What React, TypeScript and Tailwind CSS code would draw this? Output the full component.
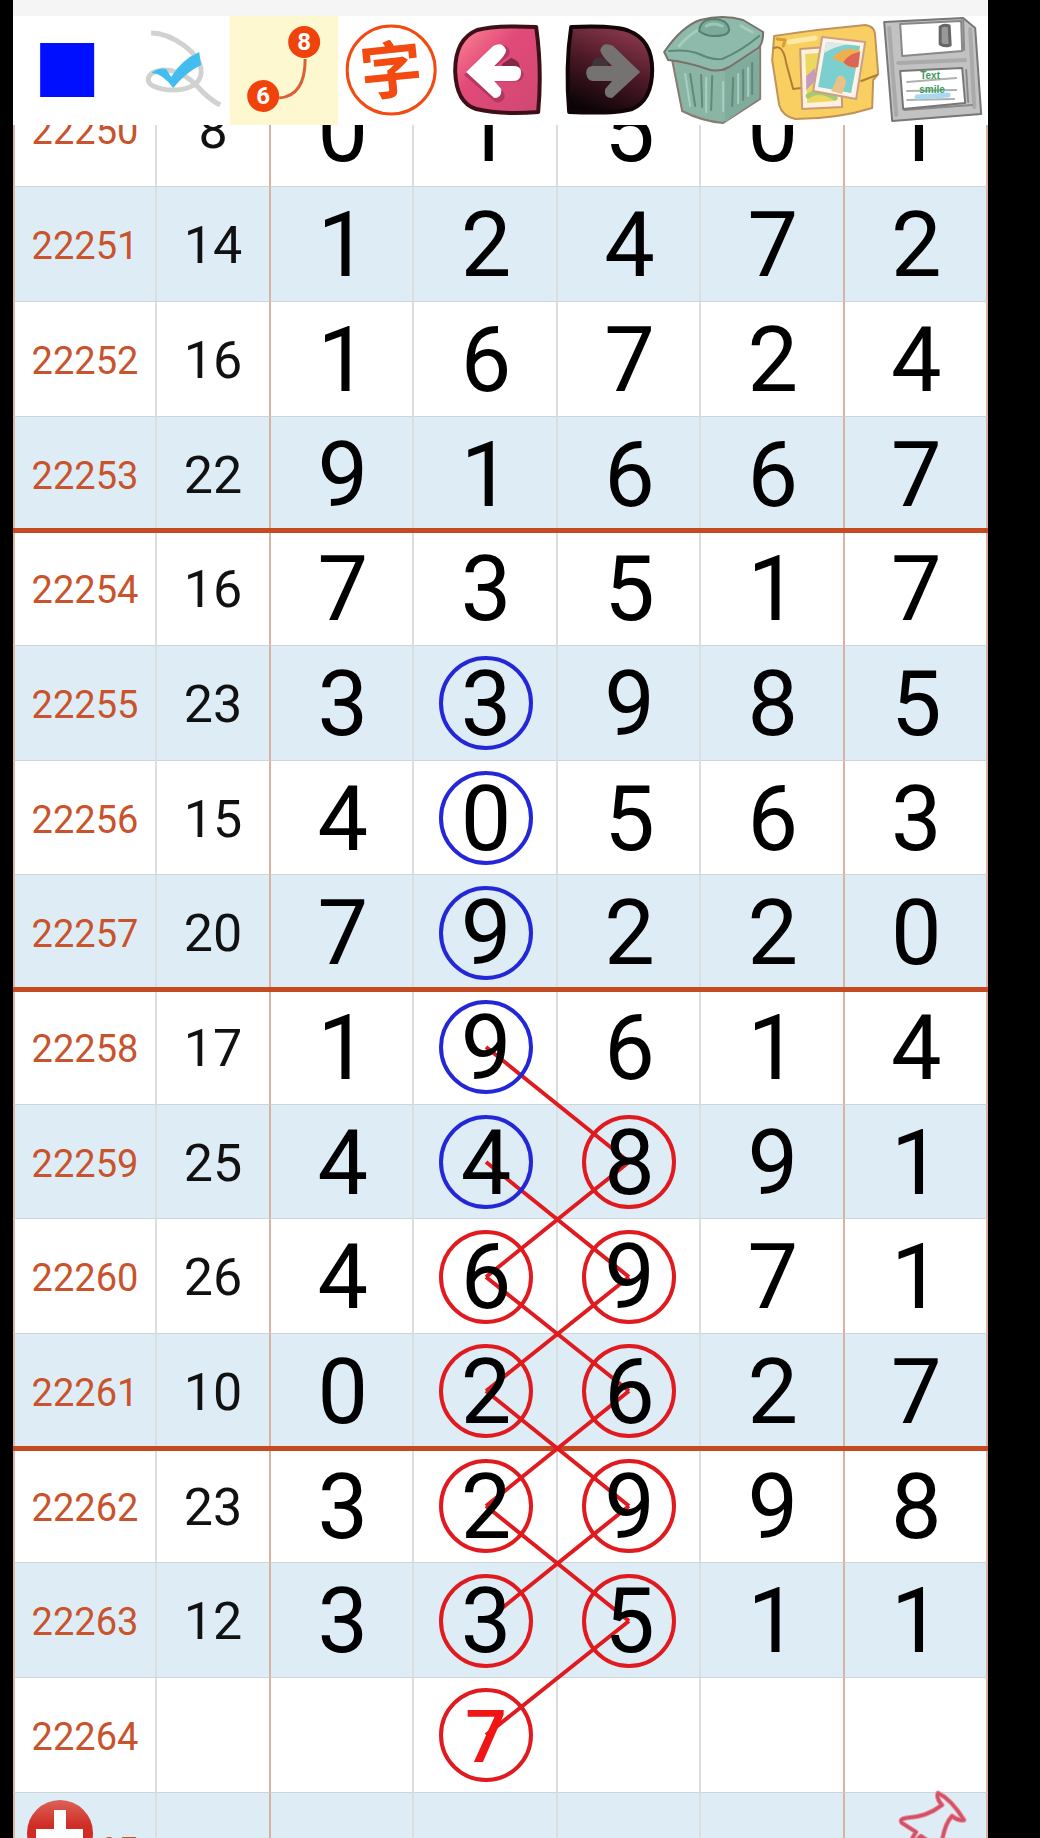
import React from 'react';

type Row = { id: string; sum: string; nums: string[] };

const ROWS: Row[] = [
  { id: '22250', sum: '8', nums: ['0', '1', '5', '0', '1'] },
  { id: '22251', sum: '14', nums: ['1', '2', '4', '7', '2'] },
  { id: '22252', sum: '16', nums: ['1', '6', '7', '2', '4'] },
  { id: '22253', sum: '22', nums: ['9', '1', '6', '6', '7'] },
  { id: '22254', sum: '16', nums: ['7', '3', '5', '1', '7'] },
  { id: '22255', sum: '23', nums: ['3', '3', '9', '8', '5'] },
  { id: '22256', sum: '15', nums: ['4', '0', '5', '6', '3'] },
  { id: '22257', sum: '20', nums: ['7', '9', '2', '2', '0'] },
  { id: '22258', sum: '17', nums: ['1', '9', '6', '1', '4'] },
  { id: '22259', sum: '25', nums: ['4', '4', '8', '9', '1'] },
  { id: '22260', sum: '26', nums: ['4', '6', '9', '7', '1'] },
  { id: '22261', sum: '10', nums: ['0', '2', '6', '2', '7'] },
  { id: '22262', sum: '23', nums: ['3', '2', '9', '9', '8'] },
  { id: '22263', sum: '12', nums: ['3', '3', '5', '1', '1'] },
  { id: '22264', sum: '', nums: ['', '7', '', '', ''] },
  { id: '22265', sum: '', nums: ['', '', '', '', ''] },
];

const BLUE = '#2427d8';
const RED = '#e01a1e';

// overlay coordinates, relative to the top left of the table
const LEFT_X = 473;
const RIGHT_X = 616;
const rowY = (i: number) => Math.round(i * 114.67 + 58);

const CIRCLES = [
  ...[5, 6, 7, 8, 9].map((r) => ({ x: LEFT_X, r, color: BLUE })),
  ...[10, 11, 12, 13, 14].map((r) => ({ x: LEFT_X, r, color: RED })),
  ...[9, 10, 11, 12, 13].map((r) => ({ x: RIGHT_X, r, color: RED })),
];

// sits above the row backgrounds and below the digits
function Marks() {
  return (
    <svg
      viewBox="0 0 975 1835"
      preserveAspectRatio="none"
      className="absolute inset-x-0 top-0 z-10 h-[1835px] w-full pointer-events-none"
      fill="none"
      strokeWidth="4"
    >
      {[8, 9, 10, 11, 12].map((r) => (
        <path key={r} d={`M${LEFT_X} ${rowY(r)}L${RIGHT_X} ${rowY(r + 1)}`} stroke={RED} />
      ))}
      {[9, 10, 11, 12, 13].map((r) => (
        <path key={r} d={`M${RIGHT_X} ${rowY(r)}L${LEFT_X} ${rowY(r + 1)}`} stroke={RED} />
      ))}
      {CIRCLES.map((c) => (
        <circle key={`${c.x}-${c.r}`} cx={c.x} cy={rowY(c.r)} r="45" stroke={c.color} />
      ))}
    </svg>
  );
}

function ColorIcon() {
  return <path d="M27 27h54v54H27z" fill="#0010ff" />;
}

function ScribbleIcon() {
  return (
    <g fill="none">
      <path
        d="M30 17C49 17 80 36 80 56C79 76 48 77 32 70C24 66 26 57 37 55C48 52 63 57 75 69C82 77 89 84 99 89"
        stroke="#d0d2d0"
        strokeWidth="5"
      />
      <path d="M31 56Q38 51 45 53L50 61Q60 44 78 36L80 49Q65 56 52 72Q42 58 31 57Z" fill="#43bdf0" />
    </g>
  );
}

function LinkIcon() {
  return (
    <g fontFamily="Roboto, sans-serif" fontWeight="700" fontSize="24" textAnchor="middle">
      <path d="M75 43Q75 80 49 82" fill="none" stroke="#d9603a" strokeWidth="3" />
      <circle cx="74" cy="26" r="16" fill="#f0430c" />
      <circle cx="33" cy="80" r="16" fill="#f0430c" />
      <text x="74" y="34" fill="#fff">8</text>
      <text x="33" y="88" fill="#fff">6</text>
    </g>
  );
}

function CharIcon() {
  return (
    <g>
      <circle cx="53" cy="54" r="44" fill="none" stroke="#f24a10" strokeWidth="3" />
      <text
        x="53"
        y="77"
        transform="rotate(-6 53 54)"
        textAnchor="middle"
        fontFamily="Noto Sans CJK SC, sans-serif"
        fontWeight="700"
        fontSize="62"
        fill="#f24a10"
      >
        字
      </text>
    </g>
  );
}

function UndoIcon() {
  return (
    <g>
      <defs>
        <linearGradient id="undo" x1="0" y1="0" x2="1" y2="1">
          <stop offset="0" stopColor="#ff8a96" />
          <stop offset=".4" stopColor="#e24a78" />
          <stop offset="1" stopColor="#cf4874" />
        </linearGradient>
      </defs>
      <path
        d="M90 11Q96 54 92 96Q55 99 30 93Q10 87 9 55Q9 23 31 14Q50 9 90 11Z"
        fill="url(#undo)"
        stroke="#3d1018"
        strokeWidth="4"
        strokeLinejoin="round"
      />
      <path d="M56 48L65 42Q73 44 74 52L56 54Z" fill="#7e2a48" />
      <path
        d="M57 36L28 59L52 80M34 59H71"
        fill="none"
        stroke="#9a2c54"
        strokeOpacity=".6"
        strokeWidth="13"
        strokeLinecap="round"
      />
      <path d="M20 56L47 30Q56 25 60 34Q60 39 48 50H68Q75 50 75 57Q74 65 68 65H48L55 73Q56 82 48 82Z" fill="#fff" />
    </g>
  );
}

function RedoIcon() {
  return (
    <g>
      <defs>
        <linearGradient id="redo" x1=".7" y1="0" x2=".3" y2="1">
          <stop offset="0" stopColor="#8c3a4c" />
          <stop offset=".5" stopColor="#4a1826" />
          <stop offset="1" stopColor="#0a0406" />
        </linearGradient>
      </defs>
      <path
        d="M16 11Q60 9 74 15Q97 24 97 54Q97 84 77 93Q60 98 14 96Q10 50 16 11Z"
        fill="url(#redo)"
        stroke="#120507"
        strokeWidth="4"
        strokeLinejoin="round"
      />
      <path d="M38 44Q45 38 52 46L53 51L36 52Z" fill="#40333a" />
      <path d="M85 56L58 30Q48 25 45 34Q46 40 57 50H38Q31 50 31 57Q32 65 38 65H57L50 73Q48 82 57 82Z" fill="#757272" />
    </g>
  );
}

function TrashIcon() {
  return (
    <g strokeLinejoin="round" strokeLinecap="round">
      <path d="M9 44L19 95Q38 105 60 107L97 83V30L62 54Z" fill="#8ab5a5" stroke="#8a7a72" strokeWidth="2" />
      <path d="M62 54V106L96 82V34Z" fill="#7fac9c" />
      <path
        d="M27 58L32 90M38 59L39 91M49 60L48 94M70 62L69 90M80 54V84M89 47V78"
        fill="none"
        stroke="#618878"
        strokeWidth="2"
      />
      <path d="M22 58L27 90M43 62V96M75 58V87M60 66V95M85 52V80" fill="none" stroke="#a8cebf" strokeWidth="2" />
      <path
        d="M1 36Q19 10 37 4Q60 -2 80 4L100 16Q100 28 95 32L66 51Q55 57 44 53Q24 46 5 44Z"
        fill="#8ebaab"
        stroke="#7b706a"
        strokeWidth="2"
      />
      <path d="M6 35Q24 33 36 38Q48 44 59 43Q78 35 96 20" fill="none" stroke="#5b887a" strokeWidth="2" />
      <path d="M16 30Q26 18 37 13M78 10L89 16" fill="none" stroke="#a5ccbd" strokeWidth="3" />
      <path d="M36 15Q37 3 52 3Q65 4 66 14Q65 20 51 20Q42 20 36 15Z" fill="#7cab9c" stroke="#5a7f72" strokeWidth="2" />
      <path d="M43 10Q50 6 59 10" fill="none" stroke="#9cc8b9" strokeWidth="3" />
    </g>
  );
}

function GalleryIcon() {
  return (
    <g strokeLinejoin="round" strokeLinecap="round">
      <path
        d="M3 20Q30 16 46 14L94 9Q104 10 104 20L107 58L102 64L101 92Q66 103 24 103Q11 100 8 89L1 44Z"
        fill="#f9cf62"
        stroke="#c09458"
        strokeWidth="2"
      />
      <path d="M3 32Q12 28 15 47L22 73L30 72M90 65L106 59" fill="none" stroke="#b27c38" strokeWidth="2" />
      <path d="M6 23L14 24L12 30" fill="none" stroke="#dd9c33" strokeWidth="3" />
      <path d="M18 26L44 22" fill="none" stroke="#fde9a6" strokeWidth="5" />
      <path d="M29 33L69 30L71 91L31 93Z" fill="#fff0df" stroke="#c79b74" strokeWidth="2" />
      <path d="M34 38L64 36V85L36 87Z" fill="#ecd75f" />
      <path d="M35 60L44 52V65L35 74Z" fill="#c79bc0" />
      <path d="M37 80Q48 72 64 82" fill="none" stroke="#a4cb72" strokeWidth="5" />
      <path d="M51 21L94 26L85 83L42 75Z" fill="#fff2e8" stroke="#c9a184" strokeWidth="2" />
      <path d="M55 26L89 30L80 77L47 71Z" fill="#7bd0cf" />
      <path d="M55 26L79 28Q64 30 53 37Z" fill="#dfe9e8" />
      <path d="M61 42Q74 28 89 35L87 51Q78 53 72 47Z" fill="#eeb04f" />
      <path d="M72 46Q80 36 89 36L87 51Q78 53 72 46Z" fill="#dc6655" />
      <path d="M60 75L67 60Q73 58 75 66L71 78Z" fill="#e9c28a" />
    </g>
  );
}

function SaveIcon() {
  return (
    <g strokeLinejoin="round" strokeLinecap="round">
      <path d="M4 6L83 2L95 12L101 98L12 105Z" fill="#c2c2c2" stroke="#777" strokeWidth="2" />
      <path d="M9 12L16 99M90 13L94 91M18 47L85 44" fill="none" stroke="#aaa" strokeWidth="4" />
      <path d="M83 3L84 34M86 54L88 86M24 94L92 89" fill="none" stroke="#8a8a8a" strokeWidth="2" />
      <path d="M20 8L81 5L82 35L22 40Z" fill="#fff" stroke="#888" strokeWidth="2" />
      <path d="M60 11Q64 8 69 10L70 29Q64 31 60 28Z" fill="#999" stroke="#666" strokeWidth="3" />
      <path d="M20 55L82 52L85 87L23 93Z" fill="#fff" stroke="#777" strokeWidth="2" />
      <path d="M27 66L76 62M27 75L76 74M27 84L74 83" fill="none" stroke="#b0b0b0" strokeWidth="2" />
      <path d="M37 81L68 79" fill="none" stroke="#a9d9ef" strokeWidth="5" />
      <g fill="#3a9c5c" fontFamily="Liberation Sans, sans-serif" fontSize="10" fontWeight="700">
        <text x="40" y="63">Text</text>
        <text x="39" y="77">smile</text>
      </g>
    </g>
  );
}

const TOOLS = [
  { label: 'Color', Icon: ColorIcon },
  { label: 'Draw', Icon: ScribbleIcon },
  { label: 'Connect', Icon: LinkIcon, active: true },
  { label: 'Character', Icon: CharIcon },
  { label: 'Undo', Icon: UndoIcon },
  { label: 'Redo', Icon: RedoIcon },
  { label: 'Clear', Icon: TrashIcon },
  { label: 'Gallery', Icon: GalleryIcon },
  { label: 'Save', Icon: SaveIcon },
];

function Toolbar() {
  return (
    <header className="shrink-0 bg-white border-t-16 border-[#f5f5f5]">
      <div className="grid grid-cols-9">
        {TOOLS.map(({ label, Icon, active }) => (
          <button
            key={label}
            aria-label={label}
            className={`h-[109px] cursor-pointer ${active ? 'bg-[#fef8d0]' : 'bg-white'}`}
          >
            <svg viewBox="0 0 108 109" className="w-full h-full">
              <Icon />
            </svg>
          </button>
        ))}
      </div>
    </header>
  );
}

function numCell(row: Row, n: string, i: number) {
  const line = i === 3 || i === 4 ? 'border-r-[#d8b3a4]' : 'border-r-[#d9dee0]';
  const text = row.id === '22264' ? 'text-[73px] font-medium text-[#f01414]' : 'text-[90px] text-black';
  return (
    <td key={i} className={`p-0 pt-1 pl-[2px] text-center border-r-2 leading-none ${line} ${text}`}>
      <span className="relative z-20">{n}</span>
    </td>
  );
}

export default function App() {
  return (
    <div className="h-screen bg-black pl-[13px] pr-[52px] font-['Roboto',sans-serif]">
      <div className="h-full flex flex-col bg-white overflow-hidden">
        <Toolbar />
        <main className="flex-1 min-h-0 relative overflow-hidden">
          <div className="relative -mt-[53px]">
            <table className="w-full table-fixed border-separate border-spacing-0">
              <colgroup>
                <col className="w-[144px]" />
                <col className="w-[114px]" />
                <col span={5} />
              </colgroup>
              <tbody>
                {ROWS.map((row, r) => (
                  <tr
                    key={row.id}
                    className={`relative [&>*]:border-b [&>*]:border-b-[#ccd6da] ${
                      r % 3 === 0 && r > 0 ? 'h-[114px]' : 'h-[115px]'
                    } ${r % 2 ? 'bg-[#deedf5]' : 'bg-white'}`}
                  >
                    <th
                      scope="row"
                      className="p-0 pt-1 border-l-2 border-l-[#dcb8aa] border-r-2 border-r-[#d9dee0] text-[38px] leading-none font-normal text-[#c8532c]"
                    >
                      {row.id}
                      {/* heavy rule closing each block of four */}
                      {r % 4 === 3 && r < 15 && (
                        <span className="absolute z-[5] inset-x-0 -bottom-[2px] h-[5px] bg-[#c44a22]" />
                      )}
                    </th>
                    <td className="p-0 pt-1 border-r-2 border-r-[#d8b3a4] text-center text-[52px] leading-none text-[#111]">
                      {row.sum}
                    </td>
                    {row.nums.map((n, i) => numCell(row, n, i))}
                  </tr>
                ))}
              </tbody>
            </table>
            <Marks />
          </div>
          <button aria-label="Add" className="absolute z-20 left-[13px] top-[1674px] cursor-pointer">
            <svg width="68" height="68" viewBox="0 0 68 68">
              <defs>
                <linearGradient id="add" x1="0" y1="0" x2="0" y2="1">
                  <stop offset="0" stopColor="#dc6258" />
                  <stop offset=".4" stopColor="#cf2c25" />
                </linearGradient>
              </defs>
              <circle cx="34" cy="34" r="33" fill="url(#add)" />
              <path d="M28 11H40V30H57V40H40V58H28V40H10V30H28Z" fill="#fff" />
            </svg>
          </button>
          <button aria-label="Pin" className="absolute z-20 right-[20px] top-[1665px] cursor-pointer">
            <svg width="70" height="70" viewBox="0 0 70 70" fill="none" strokeLinejoin="round">
              <path
                d="M40 3Q53 9 66 30Q60 31 54 26Q45 36 43 60L23 46L5 64L18 42L4 33Q1 29 8 28Q29 27 44 15Q38 8 40 3Z"
                stroke="#ef8d9b"
                strokeWidth="5"
              />
              <path
                d="M40 3Q53 9 66 30Q60 31 54 26Q45 36 43 60L23 46L5 64L18 42L4 33Q1 29 8 28Q29 27 44 15Q38 8 40 3Z"
                stroke="#cf5268"
                strokeWidth="3"
              />
            </svg>
          </button>
        </main>
      </div>
    </div>
  );
}
